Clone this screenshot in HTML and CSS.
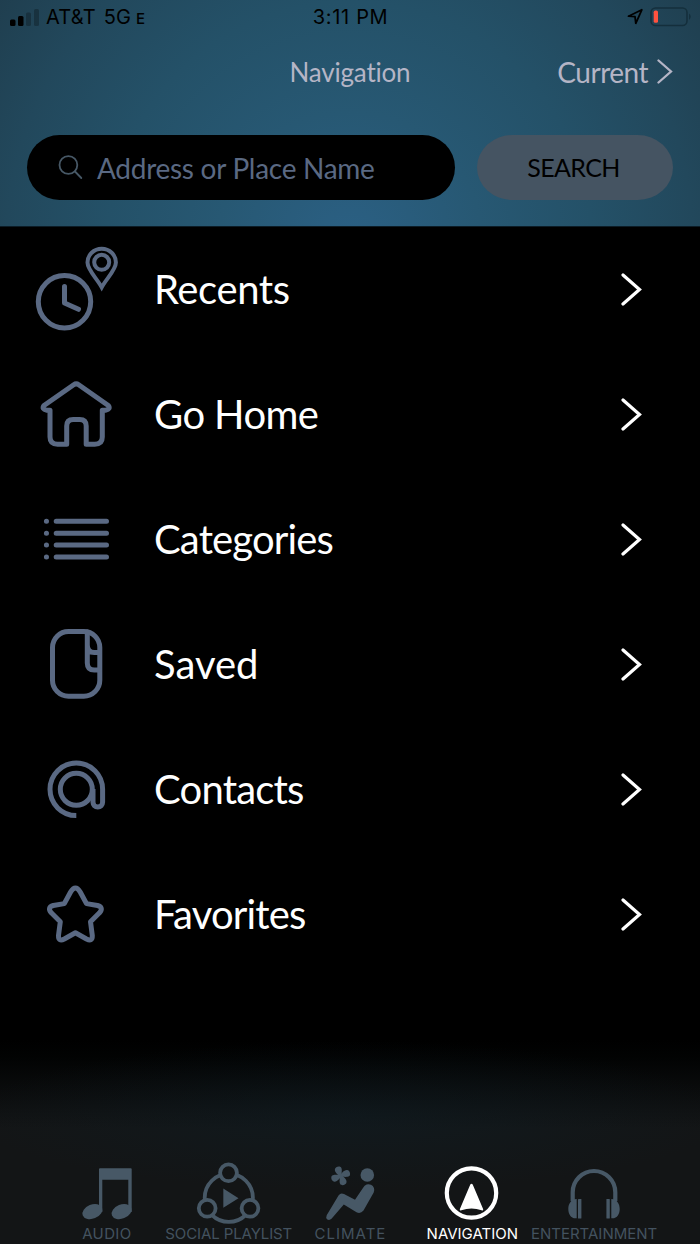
FILE: index.html
```html
<!DOCTYPE html>
<html lang="en">
<head>
    <meta charset="UTF-8">
    <meta name="viewport" content="width=device-width, initial-scale=1.0">
    <title>Navigation</title>
    <link rel="stylesheet" href="styles.css">
</head>
<body>
    <header class="header">
        <div class="status-bar">
            <div class="carrier">
                <svg class="signal" width="30" height="20" viewBox="0 0 30 20">
                    <rect x="0" y="12.5" width="5.5" height="6.5" rx="1.5"/>
                    <rect x="8" y="9" width="5.5" height="10" rx="1.5"/>
                    <rect class="dim" x="16" y="5.5" width="5" height="13.5" rx="1.5"/>
                    <rect class="dim" x="24" y="2" width="5" height="17" rx="1.5"/>
                </svg>
                <span class="carrier-name">AT&amp;T</span>
                <span class="network">5G<small>E</small></span>
            </div>
            <div class="clock">3:11 PM</div>
            <div class="battery">
                <svg width="68" height="20" viewBox="0 0 68 20">
                    <path d="M1.500 9.2 14.800 2.800 8.800 16.300 8 9.6Z" fill="none" stroke="#000" stroke-width="1.8" stroke-linejoin="round"/>
                    <rect x="24" y="1" width="36" height="17.5" rx="4.5" fill="none" stroke="#142f3c" stroke-width="1.6"/>
                    <rect x="26.700" y="3.6" width="4.3" height="12.2" rx="1.6" fill="#ff523f"/>
                    <path d="M62 6.5q3.500 3.2 0 6.5z" fill="#142f3c"/>
                </svg>
            </div>
        </div>

        <div class="title-bar">
            <h1>Navigation</h1>
            <a class="current">
                <span>Current</span>
                <svg width="16" height="26" viewBox="0 0 16 26"><path d="M1.5 1.500 14 12.500 1.500 23.500"/></svg>
            </a>
        </div>

        <div class="search-bar">
            <div class="search-input">
                <svg width="26" height="26" viewBox="0 0 26 26">
                    <circle cx="10.4" cy="10" r="8.9"/>
                    <path d="M17 16.500 23.300 23"/>
                </svg>
                <span>Address or Place Name</span>
            </div>
            <button class="search-button"><span>SEARCH</span></button>
        </div>
    </header>

    <main class="menu">
        <div class="row">
            <svg class="icon" viewBox="0 0 100 125">
                <circle cx="38.5" cy="74.7" r="26.2"/>
                <path d="M38.5 59.5V76L52.5 82.3"/>
                <path class="thin" d="M75.7 60.3C71 51.5 61.5 43 61.5 35.5a14.2 13.7 0 0 1 28.4 0C89.9 43 80.4 51.5 75.7 60.3z"/>
                <circle class="thin" cx="75.7" cy="35.3" r="7.5"/>
            </svg>
            <span class="label recents">Recents</span>
            <svg class="chevron" viewBox="0 0 22 34"><path d="M2 2 18.5 16.5 2 31"/></svg>
        </div>
        <div class="row">
            <svg class="icon" viewBox="0 0 100 125">
                <path d="M24 58.3V85q0 7.2 7.5 7.2h9.2V74q0-6.5 6.5-6.5h6.5q6.5 0 6.5 6.5v18.2h8.6q7.5 0 7.5-7.2V58.3h3.2q5.5-1 2.8-4.8L52.7 32.7q-2.5-1.7-5 0L18 53.5q-2.7 3.8 2.8 4.8z"/>
            </svg>
            <span class="label home">Go Home</span>
            <svg class="chevron" viewBox="0 0 22 34"><path d="M2 2 18.5 16.5 2 31"/></svg>
        </div>
        <div class="row">
            <svg class="icon" viewBox="0 0 100 125">
                <path d="M30.2 44.3H80.5M30.2 56.2H80.5M30.2 68.1H80.5M30.2 80H80.5M20.4 44.3h.1M20.4 56.2h.1M20.4 68.1h.1M20.4 80h.1"/>
            </svg>
            <span class="label categories">Categories</span>
            <svg class="chevron" viewBox="0 0 22 34"><path d="M2 2 18.5 16.5 2 31"/></svg>
        </div>
        <div class="row">
            <svg class="icon" viewBox="0 0 100 125">
                <rect x="26.5" y="29.5" width="47.3" height="64.7" rx="16"/>
                <path d="M61.3 30V61q0 7 7 7H73M61.3 43q0 7.6 7 7.6H73"/>
            </svg>
            <span class="label saved">Saved</span>
            <svg class="chevron" viewBox="0 0 22 34"><path d="M2 2 18.5 16.5 2 31"/></svg>
        </div>
        <div class="row">
            <svg class="icon butt" viewBox="0 0 100 125">
                <path d="M50.3 88.6A26.3 26.3 0 1 1 76.6 62.3V75.3a4.8 4.8 0 0 1-9.6 0V62"/>
                <circle cx="50.3" cy="62.3" r="16"/>
            </svg>
            <span class="label contacts">Contacts</span>
            <svg class="chevron" viewBox="0 0 22 34"><path d="M2 2 18.5 16.5 2 31"/></svg>
        </div>
        <div class="row">
            <svg class="icon" viewBox="0 0 100 125">
                <path d="M44.600 40Q49.400 32 54.200 40L60.500 51.600 71.500 53.500Q78 55.500 73.500 60.800L64.500 69.700 66.300 83.500Q66.500 90 60.500 87L49.400 80.800 38.300 87Q32.300 90 32.500 83.500L34.300 69.700 25.300 60.800Q20.800 55.500 27.300 53.500L38.300 51.600Z"/>
            </svg>
            <span class="label favorites">Favorites</span>
            <svg class="chevron" viewBox="0 0 22 34"><path d="M2 2 18.5 16.5 2 31"/></svg>
        </div>
    </main>

    <nav class="tabs">
        <a class="tab">
            <svg viewBox="0 0 70 70">
                <path d="M28 10.2H58.7q1 0 1 1V54H56.3V21.8H30.3V54H27V11.2q0-1 1-1z"/>
                <ellipse cx="20.400" cy="53.6" rx="10.4" ry="7" transform="rotate(-22 20.400 53.6)"/>
                <ellipse cx="49.600" cy="53.6" rx="10.4" ry="7" transform="rotate(-22 49.600 53.6)"/>
            </svg>
            <span class="t-audio">AUDIO</span>
        </a>
        <a class="tab">
            <svg viewBox="0 0 70 70">
                <g class="ring">
                    <circle cx="34.8" cy="39.8" r="24.1"/>
                    <circle cx="34.5" cy="14.8" r="8.4"/>
                    <circle cx="13.2" cy="50.3" r="8.4"/>
                    <circle cx="56" cy="50.3" r="8.4"/>
                </g>
                <path d="M29.3 30.5 44.5 40.2 29.3 49.8z"/>
            </svg>
            <span class="t-social">SOCIAL PLAYLIST</span>
        </a>
        <a class="tab">
            <svg viewBox="0 0 70 70">
                <g transform="translate(25.7 17.8) rotate(3)">
                    <path id="blade" d="M-1 1C-2-1-6.200-2.500-6.200-6-6-9.500-1-10-.2-8.500 1.500-6.500 .5-3 1 0z"/>
                    <use href="#blade" transform="rotate(90)"/>
                    <use href="#blade" transform="rotate(180)"/>
                    <use href="#blade" transform="rotate(270)"/>
                </g>
                <circle cx="52.3" cy="17" r="6.8"/>
                <path d="M11.700 57.200 23.500 37.500Q25.700 34.300 29 36L40 41.800 48.300 29.500A5.600 5.600 0 0 1 58.700 34.500L48.500 52.500Q45.500 56.300 41.500 54.300L28.800 46.500 16.500 60.800Q14.500 62.700 12.300 61.500 10.500 59.600 11.700 57.200z"/>
            </svg>
            <span class="t-climate">CLIMATE</span>
        </a>
        <a class="tab active">
            <svg viewBox="0 0 70 70">
                <circle class="compass" cx="34.5" cy="35" r="24.7"/>
                <path d="M33.300 26.600Q34.500 25 35.700 26.600L46.200 51.200Q46.300 53 44.600 52.300 34.500 48.500 24.400 52.300 22.700 53 22.800 51.200z"/>
            </svg>
            <span class="t-nav">NAVIGATION</span>
        </a>
        <a class="tab">
            <svg viewBox="0 0 70 70">
                <path class="band" d="M13.700 43V34.300a21.300 21.300 0 0 1 42.600 0V43"/>
                <path d="M17.700 41V60.300C12 61 9.300 56 9.300 51S12 41 17.700 41zM52.300 41V60.300C58 61 60.700 56 60.700 51S58 41 52.300 41z"/>
                <rect x="19" y="41" width="3.400" height="19.500" rx=".6"/>
                <rect x="47.400" y="41" width="3.400" height="19.500" rx=".6"/>
            </svg>
            <span class="t-ent">ENTERTAINMENT</span>
        </a>
    </nav>
</body>
</html>
```
FILE: styles.css
```css
:root {
    --slate: #5a6983;
    --tab: #475866;
    --muted: #b5b5c6;
}

* {
    box-sizing: border-box;
}

body {
    margin: 0;
    width: 700px;
    height: 1244px;
    display: flex;
    flex-direction: column;
    background: #000;
    color: #fff;
    font-family: Lato, "Open Sans", sans-serif;
    font-variant-ligatures: none;
    overflow: hidden;
}

.header {
    height: 227px;
    border-bottom: 1px solid #0c1c26;
    background: radial-gradient(circle 440px at 50% 108%, #2b6084 0%, #275873 30%, #245168 55%, #22485c 78%, #1f3d4d 100%);
}

.status-bar {
    height: 34px;
    padding: 0 5px 0 10px;
    display: grid;
    grid-template-columns: 1fr 80px 1fr;
    align-items: center;
    color: #000;
    font-family: Inter, sans-serif;
    font-size: 20px;
    white-space: nowrap;
}

.carrier {
    display: flex;
    align-items: center;
}

.carrier-name {
    margin-left: 6px;
    letter-spacing: 0.2px;
}

.network {
    margin-left: 8px;
}

.network small {
    margin-left: 5px;
    font-size: 15px;
    font-weight: 500;
}

.clock {
    margin-left: -4px;
    letter-spacing: 0.7px;
    text-align: center;
}

.signal {
    margin-top: -1px;
}

.signal .dim {
    opacity: 0.25;
}

.battery {
    display: flex;
    justify-content: flex-end;
}

.title-bar {
    height: 76px;
    padding: 0 27px;
    display: grid;
    grid-template-columns: 1fr auto 1fr;
    align-items: center;
    color: var(--muted);
}

.title-bar h1 {
    grid-column: 2;
    margin: 0;
    font-size: 26px;
    font-weight: 400;
    letter-spacing: -0.2px;
}

.current {
    display: flex;
    justify-content: flex-end;
    align-items: center;
    gap: 9px;
    font-size: 28px;
    letter-spacing: -0.5px;
}

.current svg {
    fill: none;
    stroke: var(--muted);
    stroke-width: 2.3;
    stroke-linecap: round;
}

.search-bar {
    display: flex;
    gap: 22px;
    padding: 25px 27px 0;
}

.search-input {
    width: 428px;
    height: 65px;
    padding-left: 31px;
    display: flex;
    align-items: center;
    gap: 13px;
    border-radius: 33px;
    background: #000;
    color: var(--slate);
    font-size: 28px;
    letter-spacing: -0.28px;
    white-space: nowrap;
}

.search-input svg {
    fill: none;
    stroke: var(--tab);
    stroke-width: 1.8;
    stroke-linecap: round;
}

.search-button {
    width: 196px;
    height: 65px;
    padding: 0 3px 2px 0;
    border: none;
    border-radius: 36px / 33px;
    background: #455462;
    color: #000;
    font-family: inherit;
    font-size: 25px;
    letter-spacing: -0.6px;
}

.menu {
    flex: 1;
}

.row {
    height: 125px;
    padding: 0 57px 0 26px;
    display: flex;
    align-items: center;
}

.icon {
    width: 100px;
    height: 125px;
    fill: none;
    stroke: var(--slate);
    stroke-width: 5;
    stroke-linecap: round;
    stroke-linejoin: round;
}

.icon .thin {
    stroke-width: 4;
    stroke-linejoin: miter;
}

.butt {
    stroke-linecap: butt;
}

.label {
    margin-left: 28px;
    padding-bottom: 2px;
    font-size: 40px;
    line-height: 48px;
}

.recents {
    letter-spacing: -0.4px;
}

.home {
    letter-spacing: -0.6px;
}

.categories {
    letter-spacing: -0.85px;
}

.contacts,
.favorites {
    letter-spacing: -0.8px;
}

.chevron {
    width: 22px;
    height: 34px;
    margin-left: auto;
    fill: none;
    stroke: #fff;
    stroke-width: 3.2;
    stroke-linecap: round;
}

.tabs {
    height: 204px;
    padding: 0 45px 1px 46px;
    display: grid;
    grid-template-columns: repeat(5, minmax(0, 1fr));
    align-items: end;
    background: radial-gradient(ellipse 380px 75px at 50% 76px, rgba(14, 32, 41, 0.4), transparent), linear-gradient(#000, #020303 18px, #0f1112 70px, #131516 88px);
}

.tab {
    display: flex;
    flex-direction: column;
    align-items: center;
    color: #43525f;
    font-family: Inter, sans-serif;
    font-size: 15px;
    line-height: 19px;
    white-space: nowrap;
}

.tab svg {
    width: 70px;
    height: 70px;
    margin-bottom: -4px;
    flex: none;
    fill: var(--tab);
}

.t-audio {
    letter-spacing: 0.4px;
}

.t-social {
    letter-spacing: -0.1px;
}

.t-climate {
    letter-spacing: 1px;
}

.ring circle {
    fill: #131516;
    stroke: var(--tab);
    stroke-width: 3.8;
}

.band {
    fill: none;
    stroke: var(--tab);
    stroke-width: 4.2;
}

.active {
    color: #fff;
}

.active svg {
    fill: #fff;
}

.compass {
    fill: none;
    stroke: #fff;
    stroke-width: 4.2;
}
```
